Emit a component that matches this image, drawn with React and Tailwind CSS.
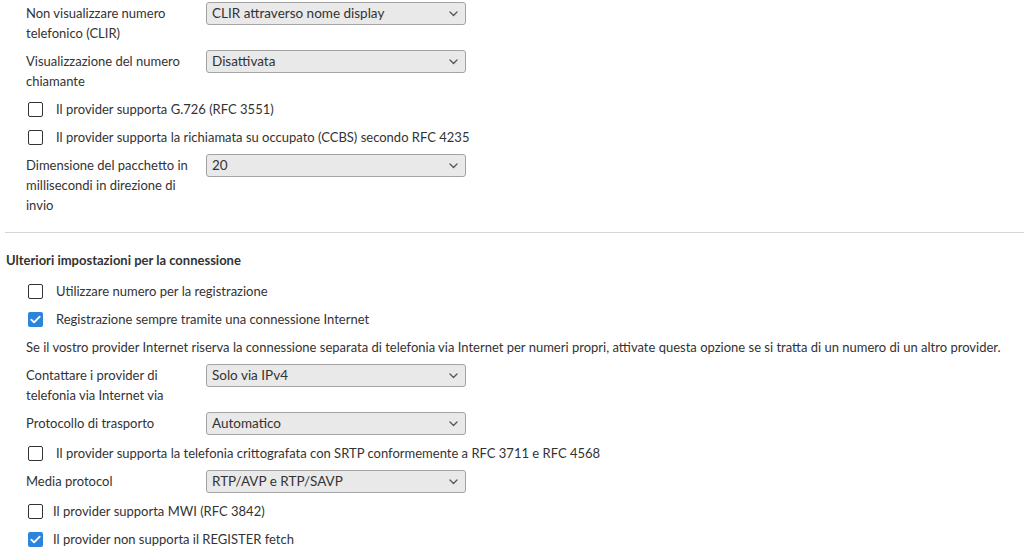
import React from "react";

const Chevron = () => (
  <svg width="9" height="6" viewBox="0 0 9 6" className="absolute right-[7px] top-[8px]">
    <path d="M1 1l3.5 3.5L8 1" fill="none" stroke="#555" strokeWidth="1.3" strokeLinecap="round" strokeLinejoin="round" />
  </svg>
);

function Select({ value }) {
  return (
    <div className="relative -mt-px h-[23px] w-[260px] shrink-0 rounded-[3px] border border-[#a3a3a3] bg-[#e9e9e9] pl-[5px] text-[13.5px] leading-[21px] text-[#333]">
      {value}
      <Chevron />
    </div>
  );
}

function Row({ label, value }) {
  return (
    <div className="flex items-start">
      <div className="w-[180px] shrink-0 pr-[4px]">
        {label.map((l, i) => (
          <div key={i} className="whitespace-nowrap">{l}</div>
        ))}
      </div>
      <Select value={value} />
    </div>
  );
}

function Check({ checked, label, gap = "gap-[13px]" }) {
  return (
    <div className={`flex items-center ${gap} pl-[2px]`}>
      {checked ? (
        <span className="flex h-[15px] w-[15px] shrink-0 items-center justify-center rounded-[2px] bg-[#2d84dc]">
          <svg width="11" height="9" viewBox="0 0 11 9">
            <path d="M1.3 4.6l2.8 2.8L9.7 1.6" fill="none" stroke="#fff" strokeWidth="1.8" strokeLinecap="round" strokeLinejoin="round" />
          </svg>
        </span>
      ) : (
        <span className="h-[15px] w-[15px] shrink-0 rounded-[2px] border-[1.5px] border-[#333] bg-white" />
      )}
      <span className="whitespace-nowrap">{label}</span>
    </div>
  );
}

export default function App() {
  return (
    <div
      className="h-[554px] w-[1024px] overflow-hidden bg-white text-[13px] leading-[20px] text-[#333]"
      style={{ fontFamily: "Lato, 'Open Sans', sans-serif" }}
    >
      <div className="flex flex-col gap-[8px] pl-[26px] pt-[3px]">
        <Row label={["Non visualizzare numero", "telefonico (CLIR)"]} value="CLIR attraverso nome display" />
        <Row label={["Visualizzazione del numero", "chiamante"]} value="Disattivata" />
        <Check label="Il provider supporta G.726 (RFC 3551)" />
        <Check label="Il provider supporta la richiamata su occupato (CCBS) secondo RFC 4235" />
        <Row
          label={["Dimensione del pacchetto in", "millisecondi in direzione di", "invio"]}
          value="20"
        />
      </div>
      <div className="ml-[5px] mt-[17px] h-px bg-[#d6d6d6]" />
      <div className="mt-[17px] pl-[6px] font-bold">Ulteriori impostazioni per la connessione</div>
      <div className="mt-[11px] flex flex-col gap-[8px] pl-[26px]">
        <Check label="Utilizzare numero per la registrazione" />
        <Check checked label="Registrazione sempre tramite una connessione Internet" />
        <div className="whitespace-nowrap">
          Se il vostro provider Internet riserva la connessione separata di telefonia via Internet per numeri propri, attivate questa opzione se si tratta di un numero di un altro provider.
        </div>
        <Row label={["Contattare i provider di", "telefonia via Internet via"]} value="Solo via IPv4" />
        <Row label={["Protocollo di trasporto"]} value="Automatico" />
        <Check label="Il provider supporta la telefonia crittografata con SRTP conformemente a RFC 3711 e RFC 4568" />
        <Row label={["Media protocol"]} value="RTP/AVP e RTP/SAVP" />
        <Check gap="gap-[10px]" label="Il provider supporta MWI (RFC 3842)" />
        <Check gap="gap-[10px]" checked label="Il provider non supporta il REGISTER fetch" />
      </div>
    </div>
  );
}
